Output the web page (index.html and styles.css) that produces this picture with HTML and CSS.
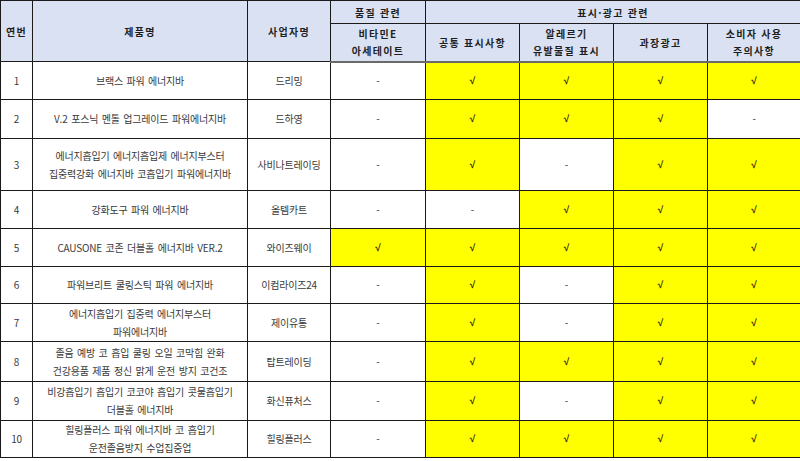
FILE: index.html
```html
<!DOCTYPE html>
<html lang="ko">
<head>
<meta charset="utf-8">
<link rel="stylesheet" href="styles.css">
</head>
<body>
<table class="grid">
  <colgroup>
    <col class="c-no"><col class="c-name"><col class="c-biz"><col class="c-q">
    <col class="c-a"><col class="c-b"><col class="c-c"><col class="c-d">
  </colgroup>
  <thead>
    <tr class="h1">
      <th rowspan="2">연번</th>
      <th rowspan="2">제품명</th>
      <th rowspan="2">사업자명</th>
      <th>품질 관련</th>
      <th colspan="4">표시·광고 관련</th>
    </tr>
    <tr class="h2">
      <th>비타민E<br>아세테이트</th>
      <th>공통 표시사항</th>
      <th>알레르기<br>유발물질 표시</th>
      <th>과장광고</th>
      <th>소비자 사용<br>주의사항</th>
    </tr>
  </thead>
  <tbody>
    <tr class="r38">
      <td>1</td><td>브랙스 파워 에너지바</td><td>드리밍</td>
      <td>-</td><td class="y chk">√</td><td class="y chk">√</td><td class="y chk">√</td><td class="y chk">√</td>
    </tr>
    <tr class="r39">
      <td>2</td><td>V.2 포스닉 멘톨 업그레이드 파워에너지바</td><td>드하영</td>
      <td>-</td><td class="y chk">√</td><td class="y chk">√</td><td class="y chk">√</td><td>-</td>
    </tr>
    <tr class="r52">
      <td>3</td><td>에너지흡입기 에너지흡입제 에너지부스터<br>집중력강화 에너지바 코흡입기 파워에너지바</td><td>사비나트레이딩</td>
      <td>-</td><td class="y chk">√</td><td>-</td><td class="y chk">√</td><td class="y chk">√</td>
    </tr>
    <tr class="r38">
      <td>4</td><td>강화도구 파워 에너지바</td><td>올템카트</td>
      <td>-</td><td>-</td><td class="y chk">√</td><td class="y chk">√</td><td class="y chk">√</td>
    </tr>
    <tr class="r38">
      <td>5</td><td>CAUSONE 코존 더블홀 에너지바 VER.2</td><td>와이즈웨이</td>
      <td class="y chk">√</td><td class="y chk">√</td><td class="y chk">√</td><td class="y chk">√</td><td class="y chk">√</td>
    </tr>
    <tr class="r37">
      <td>6</td><td>파워브리트 쿨링스틱 파워 에너지바</td><td>이컴라이즈24</td>
      <td>-</td><td class="y chk">√</td><td>-</td><td class="y chk">√</td><td class="y chk">√</td>
    </tr>
    <tr class="r38">
      <td>7</td><td>에너지흡입기 집중력 에너지부스터<br>파워에너지바</td><td>제이유통</td>
      <td>-</td><td class="y chk">√</td><td>-</td><td class="y chk">√</td><td class="y chk">√</td>
    </tr>
    <tr class="r40">
      <td>8</td><td>졸음 예방 코 흡입 쿨링 오일 코막힘 완화<br>건강용품 제품 정신 맑게 운전 방지 코건조</td><td>탑트레이딩</td>
      <td>-</td><td class="y chk">√</td><td class="y chk">√</td><td class="y chk">√</td><td class="y chk">√</td>
    </tr>
    <tr class="r39">
      <td>9</td><td>비강흡입기 흡입기 코코야 흡입기 콧물흡입기<br>더블홀 에너지바</td><td>화신퓨처스</td>
      <td>-</td><td class="y chk">√</td><td>-</td><td class="y chk">√</td><td class="y chk">√</td>
    </tr>
    <tr class="r37">
      <td>10</td><td>힐링플러스 파워 에너지바 코 흡입기<br>운전졸음방지 수업집중업</td><td>힐링플러스</td>
      <td>-</td><td class="y chk">√</td><td class="y chk">√</td><td class="y chk">√</td><td class="y chk">√</td>
    </tr>
  </tbody>
</table>
</body>
</html>
```

FILE: styles.css
```css
html, body {
  margin: 0;
  padding: 0;
  background: #ffffff;
}

.grid {
  border-collapse: collapse;
  table-layout: fixed;
  width: 800px;
  font-family: "Noto Sans CJK KR", "Noto Sans", sans-serif;
  font-size: 10px;
  color: #3a3a3a;
  letter-spacing: -0.2px;
  word-spacing: 1px;
}

.c-no { width: 32px; }
.c-name { width: 215px; }
.c-biz { width: 83px; }
.c-q { width: 95px; }
.c-a { width: 94px; }
.c-b { width: 94px; }
.c-c { width: 94px; }
.c-d { width: 93px; }

.grid th,
.grid td {
  border: 1px solid #1a1a1a;
  padding: 0;
  text-align: center;
  vertical-align: middle;
  line-height: 18px;
}

.grid th {
  background: #d9e1f2;
  color: #1e1e1e;
  font-weight: 700;
  letter-spacing: 1.3px;
  word-spacing: 0;
  line-height: 17px;
}

.h1 { height: 23px; }
.h2 { height: 38px; }
.h2 th { border-bottom: 2px solid #6a6a6a; }

.r37 { height: 37px; }
.r38 { height: 38px; }
.r39 { height: 39px; }
.r40 { height: 40px; }
.r52 { height: 52px; }

.y { background: #ffff00; }

.chk {
  font-family: "Liberation Sans", Arial, sans-serif;
  font-weight: 700;
  color: #2e2e00;
  font-size: 10px;
  letter-spacing: 0;
}
```
